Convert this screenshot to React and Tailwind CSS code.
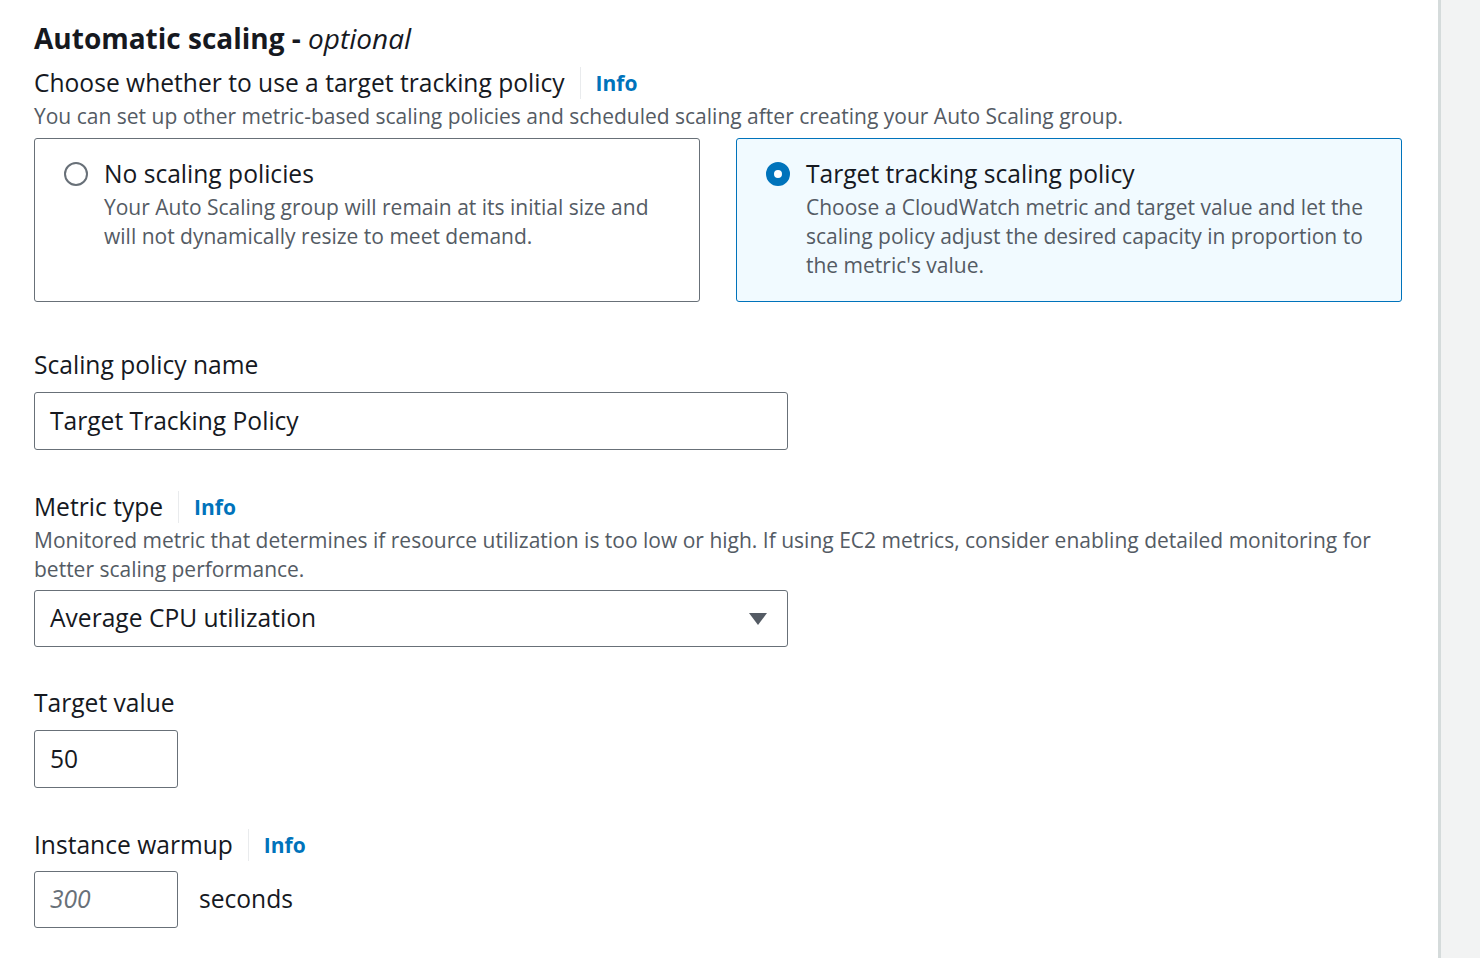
import React from "react";

const font = { fontFamily: "'Open Sans', Roboto, sans-serif" };

function Info() {
  return (
    <span className="flex items-center">
      <span className="mx-[15px] h-[32px] w-px bg-[#e9ebed]" />
      <span className="text-[21px] font-bold text-[#0073bb]">Info</span>
    </span>
  );
}

function Radio({ checked }) {
  return checked ? (
    <span className="mt-[4px] h-[24px] w-[24px] shrink-0 rounded-full border-[8px] border-[#0073bb] bg-white" />
  ) : (
    <span className="mt-[4px] h-[24px] w-[24px] shrink-0 rounded-full border-2 border-[#687078] bg-white" />
  );
}

export default function App() {
  return (
    <div className="flex h-[958px] w-[1480px] overflow-hidden bg-white text-[#16191f]" style={font}>
      <div className="flex-1 pl-[34px] pr-[36px] pt-[20px]">
        <h2 className="text-[28px] font-bold leading-[36px]">
          Automatic scaling - <span className="font-normal italic">optional</span>
        </h2>
        <div className="mt-[11px] flex items-center text-[24.6px] leading-[32px]">
          <span>Choose whether to use a target tracking policy</span>
          <Info />
        </div>
        <p className="mt-[1px] text-[21px] leading-[32px] text-[#545b64]">
          You can set up other metric-based scaling policies and scheduled scaling after creating your Auto Scaling group.
        </p>
        <div className="mt-[6px] grid grid-cols-2 gap-[36px]">
          <div className="flex h-[164px] gap-[16px] rounded-[3px] border border-[#687078] px-[29px] pt-[19px]">
            <Radio />
            <div>
              <div className="text-[24.6px] leading-[32px]">No scaling policies</div>
              <div className="mt-[3px] text-[21px] leading-[29px] text-[#545b64]">
                Your Auto Scaling group will remain at its initial size and will not dynamically resize to meet demand.
              </div>
            </div>
          </div>
          <div className="flex h-[164px] gap-[16px] rounded-[3px] border border-[#0073bb] bg-[#f1faff] px-[29px] pt-[19px]">
            <Radio checked />
            <div>
              <div className="text-[24.6px] leading-[32px]">Target tracking scaling policy</div>
              <div className="mt-[3px] text-[21px] leading-[29px] text-[#545b64]">
                Choose a CloudWatch metric and target value and let the scaling policy adjust the desired capacity in proportion to the metric's value.
              </div>
            </div>
          </div>
        </div>

        <div className="mt-[47px] text-[24.6px] leading-[32px]">Scaling policy name</div>
        <div className="mt-[11px] flex h-[58px] w-[754px] items-center rounded-[3px] border border-[#687078] px-[15px] text-[24.6px]">
          Target Tracking Policy
        </div>

        <div className="mt-[41px] flex items-center text-[24.6px] leading-[32px]">
          <span>Metric type</span>
          <Info />
        </div>
        <p className="mt-[3px] text-[21px] leading-[29px] text-[#545b64]">
          Monitored metric that determines if resource utilization is too low or high. If using EC2 metrics, consider enabling detailed monitoring for better scaling performance.
        </p>
        <div className="mt-[6px] flex h-[57px] w-[754px] items-center justify-between rounded-[3px] border border-[#687078] pl-[15px] pr-[20px] text-[24.6px]">
          <span>Average CPU utilization</span>
          <svg width="18" height="14" viewBox="0 0 18 14"><path d="M0 1h18L9 13z" fill="#545b64" /></svg>
        </div>

        <div className="mt-[40px] text-[24.6px] leading-[32px]">Target value</div>
        <div className="mt-[11px] flex h-[58px] w-[144px] items-center rounded-[3px] border border-[#687078] px-[15px] text-[24.6px]">
          50
        </div>

        <div className="mt-[41px] flex items-center text-[24.6px] leading-[32px]">
          <span>Instance warmup</span>
          <Info />
        </div>
        <div className="mt-[10px] flex items-center gap-[21px]">
          <div className="flex h-[57px] w-[144px] items-center rounded-[3px] border border-[#687078] px-[15px] text-[24.6px] italic text-[#687078]">
            300
          </div>
          <span className="text-[24.6px]">seconds</span>
        </div>
      </div>
      <div className="w-[42px] border-l-[3px] border-[#d5dbdb] bg-[#f2f3f3]" />
    </div>
  );
}
